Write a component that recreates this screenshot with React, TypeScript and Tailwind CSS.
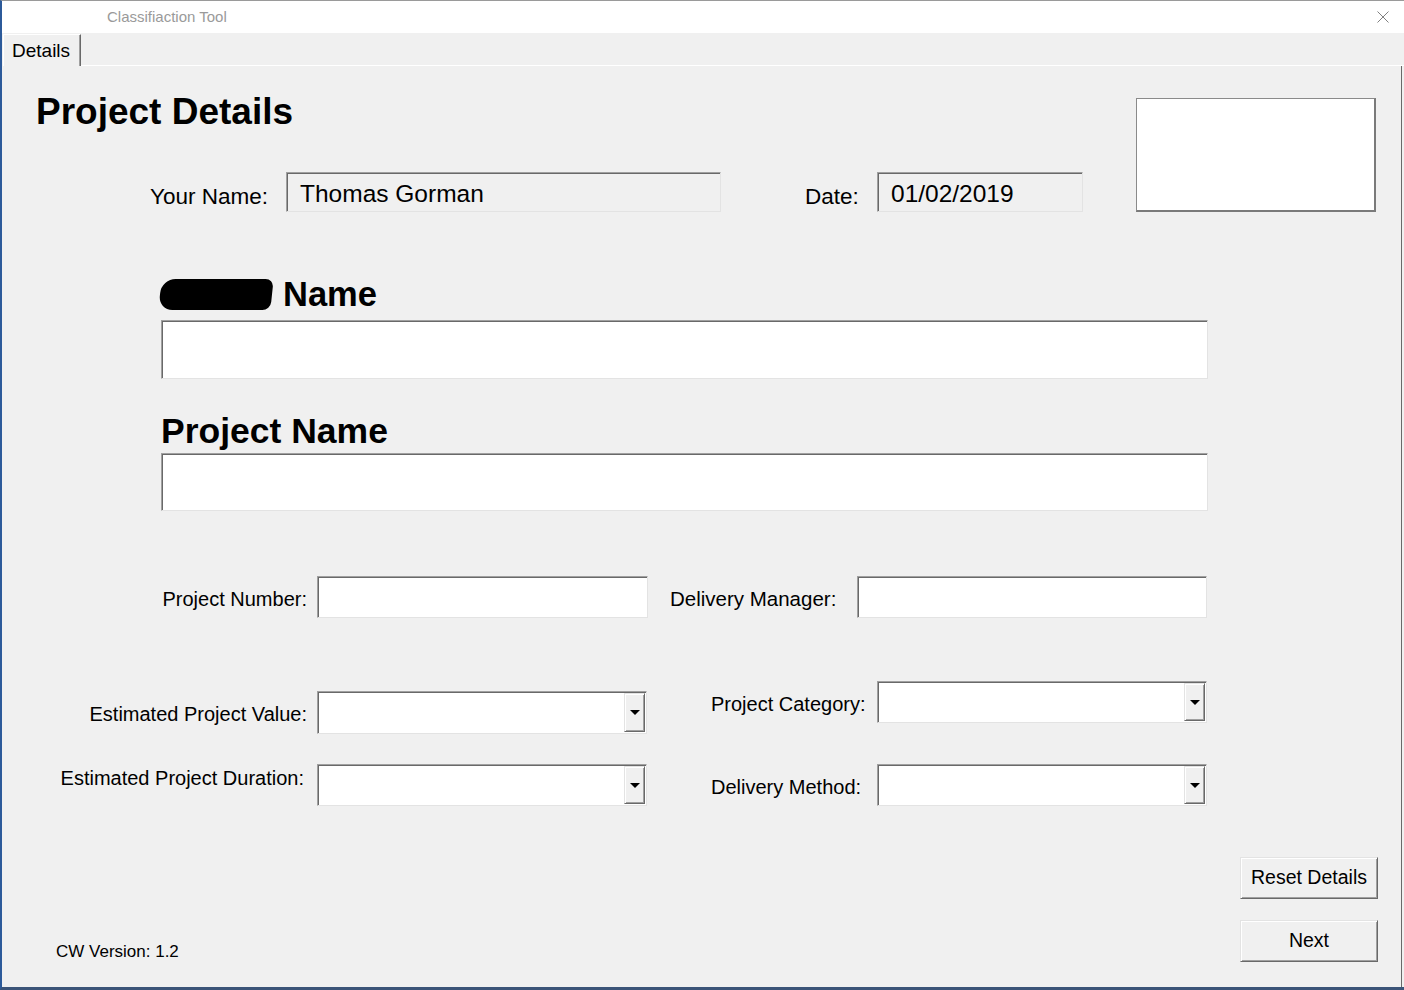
import React from 'react'

// Classic Windows 3D borders
const SUNKEN =
  'border border-t-[#a0a0a0] border-l-[#a0a0a0] border-r-[#e3e3e3] border-b-[#e3e3e3] shadow-[inset_1px_1px_0_#696969]'
const RAISED =
  'border border-t-[#e3e3e3] border-l-[#e3e3e3] border-r-[#696969] border-b-[#696969] shadow-[inset_1px_1px_0_#ffffff,inset_-1px_-1px_0_#a0a0a0]'

function TextBox({ className = '', children }: { className?: string; children?: React.ReactNode }) {
  return <div className={`${SUNKEN} ${className}`}>{children}</div>
}

function ComboBox({ className = '' }: { className?: string }) {
  return (
    <div className={`${SUNKEN} bg-white flex p-[1px] ${className}`}>
      <div className="flex-1" />
      <div className={`${RAISED} w-[21px] bg-[#f0f0f0] flex items-center justify-center`}>
        <div className="w-0 h-0 border-l-[5px] border-r-[5px] border-t-[5px] border-l-transparent border-r-transparent border-t-black" />
      </div>
    </div>
  )
}

function Button({ label }: { label: string }) {
  return (
    <div className={`${RAISED} w-[138px] h-[42px] bg-[#f0f0f0] flex items-center justify-center text-[19.5px] leading-none`}>
      {label}
    </div>
  )
}

export default function App() {
  return (
    <div className="w-[1404px] h-[990px] flex flex-col bg-[#f0f0f0] border-l-2 border-l-[#2c5a9a] border-t border-t-[#9a9a9a] border-b-[3px] border-b-[#3b5478] font-['Liberation_Sans',Arial,sans-serif] text-black overflow-hidden">
      {/* Title bar */}
      <div className="h-[32px] bg-white flex items-center justify-between pl-[105px] pr-[15px]">
        <span className="text-[15px] text-[#9a9a9a]">Classifiaction Tool</span>
        <svg width="12" height="12" viewBox="0 0 12 12" className="text-[#808080]">
          <path d="M0.5 0.5 L11.5 11.5 M11.5 0.5 L0.5 11.5" stroke="currentColor" strokeWidth="1" />
        </svg>
      </div>

      {/* Tab strip */}
      <div className="h-[33px] flex">
        <div className="ml-[1px] mt-[1px] h-[32px] w-[78px] border-l border-t border-l-white border-t-white border-r border-r-[#696969] shadow-[inset_-1px_0_0_#a0a0a0] flex items-center pl-[8px] pb-[1px] text-[19px] leading-none">
          Details
        </div>
        <div className="flex-1 border-b border-b-white" />
      </div>

      {/* Page */}
      <div className="flex-1 flex flex-col mr-[2px] border-r border-r-[#696969]">
        {/* Header row */}
        <div className="flex items-start">
          <div className="flex-1 pl-[34px]">
            <h1 className="mt-[27px] h-[37px] text-[37px] font-bold leading-none">Project Details</h1>
            <div className="mt-[42px] ml-[114px] flex items-start">
              <span className="w-[136px] mt-[14px] text-[22.5px] leading-none">Your Name:</span>
              <TextBox className="w-[435px] h-[40px] bg-[#f0f0f0] pl-[13px] pt-[9px] text-[24.5px] leading-none">
                Thomas Gorman
              </TextBox>
              <span className="ml-[84px] w-[72px] mt-[14px] text-[22.5px] leading-none">Date:</span>
              <TextBox className="w-[206px] h-[40px] bg-[#f0f0f0] pl-[13px] pt-[9px] text-[24.5px] leading-none">
                01/02/2019
              </TextBox>
            </div>
          </div>
          <div className="mt-[32px] mr-[25px] w-[240px] h-[114px] bg-white border border-[#8a8a8a] border-r-2 border-b-2 border-r-[#7a7a7a] border-b-[#7a7a7a]" />
        </div>

        {/* Client name */}
        <div className="mt-[65px] pl-[159px]">
          <div className="flex items-center h-[35px]">
            <div className="-ml-[1px] w-[112px] h-[31px] bg-black rounded-l-[14px] rounded-r-[8px] -skew-x-6" />
            <span className="ml-[11px] text-[34.5px] font-bold leading-none">Name</span>
          </div>
          <TextBox className="mt-[8px] w-[1047px] h-[59px] bg-white" />
        </div>

        {/* Project name */}
        <div className="mt-[35px] pl-[159px]">
          <div className="h-[35px] text-[35.5px] font-bold leading-none">Project Name</div>
          <TextBox className="mt-[4px] w-[1047px] h-[58px] bg-white" />
        </div>

        {/* Project number / delivery manager */}
        <div className="mt-[65px] flex items-start text-[20px] leading-none">
          <span className="w-[315px] pr-[10px] mt-[13px] text-right">Project Number:</span>
          <TextBox className="w-[331px] h-[42px] bg-white" />
          <span className="ml-[22px] w-[187px] mt-[13px] text-[20.5px]">Delivery Manager:</span>
          <TextBox className="w-[350px] h-[42px] bg-white" />
        </div>

        {/* Drop-downs */}
        <div className="flex items-start text-[20px] leading-none">
          <div className="flex flex-col">
            <div className="mt-[73px] flex items-start">
              <span className="w-[315px] pr-[10px] mt-[13px] text-right">Estimated Project Value:</span>
              <ComboBox className="w-[330px] h-[43px]" />
            </div>
            <div className="mt-[30px] flex items-start">
              <span className="w-[315px] pr-[13px] mt-[4px] text-right">Estimated Project Duration:</span>
              <ComboBox className="w-[330px] h-[42px]" />
            </div>
          </div>
          <div className="ml-[64px] flex flex-col">
            <div className="mt-[63px] flex items-start">
              <span className="w-[166px] mt-[13px]">Project Category:</span>
              <ComboBox className="w-[330px] h-[42px]" />
            </div>
            <div className="mt-[41px] flex items-start">
              <span className="w-[166px] mt-[13px]">Delivery Method:</span>
              <ComboBox className="w-[330px] h-[42px]" />
            </div>
          </div>
        </div>

        {/* Footer */}
        <div className="mt-auto flex items-end justify-between pl-[54px] pr-[23px] pb-[25px]">
          <span className="mb-[2px] text-[17px] leading-none">CW Version: 1.2</span>
          <div className="flex flex-col gap-[21px]">
            <Button label="Reset Details" />
            <Button label="Next" />
          </div>
        </div>
      </div>
    </div>
  )
}
